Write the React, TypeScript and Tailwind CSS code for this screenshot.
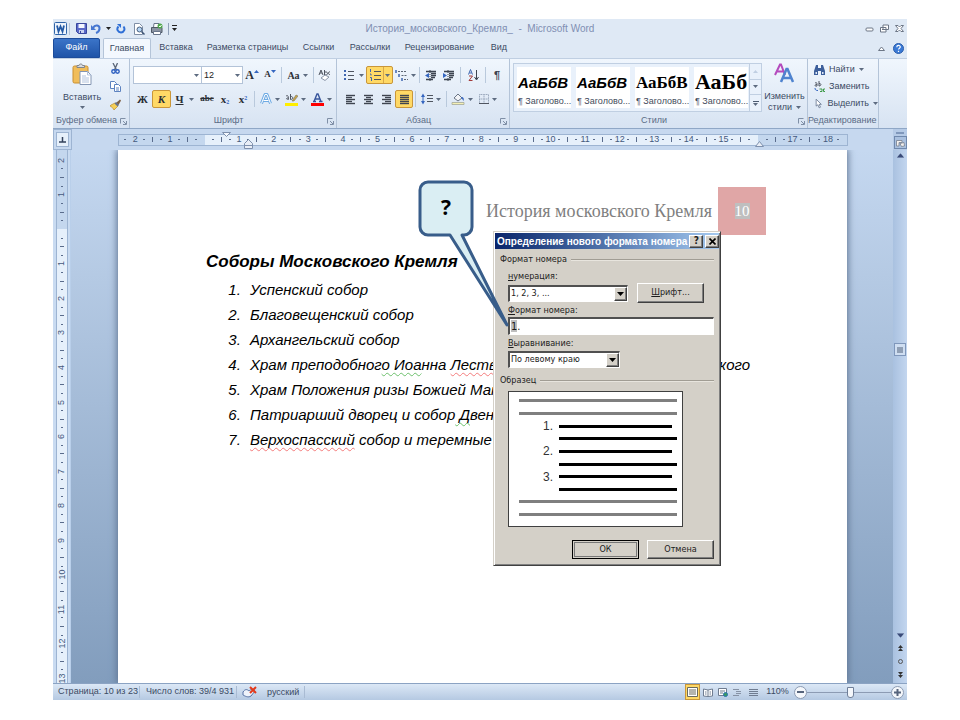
import type { ReactNode } from "react";

const TICK = "flex items-center justify-center";

function Caret({ className = "text-[#5d6b80]" }: { className?: string }) {
  return (
    <svg viewBox="0 0 5 3" className={`h-[3px] w-[5px] shrink-0 ${className}`} fill="currentColor">
      <path d="M0 0h5L2.500 3z" />
    </svg>
  );
}

function Separator() {
  return <span className="mx-[2px] h-4 w-px shrink-0 bg-[#b9c9dc]" />;
}

function ToolButton({
  label,
  width,
  active,
  caret,
  children,
}: {
  label: string;
  width: string;
  active?: boolean;
  caret?: boolean;
  children: ReactNode;
}) {
  return (
    <button
      type="button"
      aria-label={label}
      className={`flex h-[18px] shrink-0 items-center justify-center gap-[3px] rounded-[2px] ${width} ${
        active ? "border border-[#c9963a] bg-[#ffd966]" : ""
      }`}
    >
      {children}
      {caret && <Caret />}
    </button>
  );
}

function Launcher() {
  return (
    <svg viewBox="0 0 7 7" className="h-[7px] w-[7px] shrink-0" fill="none" stroke="#7f8fa6">
      <path d="M.5 5.500V.5h5M3 3l3 3M6.500 3v3.500H3" />
    </svg>
  );
}

function Group({
  title,
  width,
  launcher = true,
  children,
}: {
  title: string;
  width: string;
  launcher?: boolean;
  children: ReactNode;
}) {
  return (
    <section
      className={`flex shrink-0 flex-col border-r border-[#b4c4d8] ${width}`}
      aria-label={title}
    >
      <div className="min-h-0 flex-1">{children}</div>
      <div className="flex h-[14px] items-center pr-[2px] text-[#5b6c86]">
        <span className="flex-1 text-center whitespace-nowrap">{title}</span>
        {launcher && <Launcher />}
      </div>
    </section>
  );
}

function Lines({ rows }: { rows: [number, number][] }) {
  return (
    <svg viewBox="0 0 11 11" className="h-[11px] w-[11px]" stroke="#3f4550" strokeWidth="1.400">
      {rows.map(([x1, x2], i) => (
        <path key={i} d={`M${x1} ${i * 2 + 1.5}H${x2}`} />
      ))}
    </svg>
  );
}

function ListGlyph({ kind }: { kind: "bullets" | "numbers" | "levels" }) {
  return (
    <svg viewBox="0 0 13 12" className="h-[12px] w-[13px]" fill="none">
      {kind === "bullets" && (
        <>
          <path d="M1 2h2M1 6h2M1 10h2" stroke="#3f66b0" strokeWidth="2" />
          <path d="M5 2.500h6M5 6.500h6M5 10.500h6" stroke="#4f5560" />
        </>
      )}
      {kind === "numbers" && (
        <>
          <path d="M1.500 0v3M1 5h1v1.500M1 8.500h1.500V12" stroke="#3f66b0" />
          <path d="M5 2.500h7M5 6.500h7M5 10.500h7" stroke="#4f5560" />
        </>
      )}
      {kind === "levels" && (
        <>
          <path d="M1 1v3M4 5v3M7 9v3" stroke="#3f66b0" strokeWidth="1.500" />
          <path d="M3 2.500h8M6.500 6.500h5M9 10.500h4" stroke="#5c6674" strokeDasharray="2 1" />
        </>
      )}
    </svg>
  );
}

function IndentGlyph({ flip }: { flip?: boolean }) {
  return (
    <svg viewBox="0 0 12 11" className="h-[11px] w-[12px]" fill="none">
      <path d="M1 1.500h10M6 3.500h5M6 5.500h5M6 7.500h4M1 9.500h7" stroke="#3d4450" strokeWidth="1.300" />
      <path d={flip ? "M0 3v5l4-2.500z" : "M4 3v5L0 5.500z"} fill="#3566c0" />
      <path d="M5 0v11" stroke="#3d4450" strokeDasharray="1 1" />
    </svg>
  );
}

function QuickAccess() {
  return (
    <div className="flex items-center pl-[1px]">
      <svg viewBox="0 0 13 13" className="h-[13px] w-[13px]">
        <rect x=".5" y=".5" width="12" height="12" rx="1" fill="#eef4fc" stroke="#2f64a8" />
        <path d="M3 3.500 4.500 9.500 6.500 4.500 8.500 9.500 10 3.500" fill="none" stroke="#2359a5" strokeWidth="1.800" />
      </svg>
      <span className="mx-[2px] h-3 w-px bg-[#b4c4d8]" />
      <button type="button" aria-label="Сохранить" className="flex w-[18px] justify-center">
        <svg viewBox="0 0 11 11" className="h-[11px] w-[11px]">
          <path d="M.5.5h10v10h-8l-2-2z" fill="#5968c8" stroke="#38469d" />
          <path d="M2.500 1h6v4h-6z" fill="#f3f6ff" />
          <path d="M3 7h5v3H3z" fill="#c9d2f0" />
          <path d="M4 8h1v2H4z" fill="#38469d" />
        </svg>
      </button>
      <button type="button" aria-label="Отменить" className="flex w-[22px] items-center justify-center gap-[5px]">
        <svg viewBox="0 0 10 11" className="h-[11px] w-[10px]" fill="none" stroke="#4677d1" strokeWidth="2">
          <path d="M2 5c2-4 7-3 6.500 1C8 8.500 6.500 9.500 5 10" />
          <path d="M0 2v5h5z" fill="#4677d1" stroke="none" />
        </svg>
        <Caret className="text-[#222]" />
      </button>
      <button type="button" aria-label="Повторить" className="flex w-[18px] justify-center">
        <svg viewBox="0 0 10 11" className="h-[11px] w-[10px]" fill="none" stroke="#2f6fd6" strokeWidth="2">
          <path d="M2.500 3.500C0 6 2 9.500 5 9.500S9.500 6 7.500 3.500" />
          <path d="M1 1h4v4z" fill="#2f6fd6" stroke="none" />
        </svg>
      </button>
      <button type="button" aria-label="Просмотр" className="flex w-[18px] justify-center">
        <svg viewBox="0 0 12 12" className="h-[12px] w-[12px]" fill="none">
          <path d="M1.500.5h5l3 3v8h-8z" fill="#fff" stroke="#7f8ea5" />
          <circle cx="6.500" cy="6.500" r="2.500" fill="#b5d5f5" stroke="#4b617f" />
          <path d="m8.500 8.500 3 3" stroke="#3e5474" strokeWidth="1.500" />
        </svg>
      </button>
      <button type="button" aria-label="Печать" className="flex w-[18px] justify-center">
        <svg viewBox="0 0 12 12" className="h-[12px] w-[12px]">
          <path d="M3 .5h5l1 4H2.500z" fill="#fff" stroke="#69758a" />
          <path d="M.5 4.500h10.500v5H.5z" fill="#8b94a3" stroke="#4e5866" />
          <path d="M2.500 8.500h7v3h-7z" fill="#fff" stroke="#69758a" />
          <circle cx="9" cy="3" r="2.500" fill="#4ea64a" />
          <path d="m8 3 1 1 1.500-2" fill="none" stroke="#fff" />
        </svg>
      </button>
      <span className="mx-[2px] h-3 w-px bg-[#8fa0b8]" />
      <svg viewBox="0 0 7 7" className="h-[7px] w-[7px]" fill="#222">
        <path d="M1 0h5v1H1zM1 3h5L3.500 6z" />
      </svg>
    </div>
  );
}

function TitleBar() {
  return (
    <header className="flex h-[19px] items-center justify-between text-[#7f8fb3]">
      <div className="w-[140px]">
        <QuickAccess />
      </div>
      <h1 className="text-[10px] whitespace-pre">История_московского_Кремля_  -  Microsoft Word</h1>
      <div className="flex w-[140px] items-center justify-end gap-[6px] pr-[3px]">
        <button type="button" aria-label="Свернуть">
          <svg viewBox="0 0 9 9" className="h-[9px] w-[9px]" fill="#fff" stroke="#6c7686">
            <rect x="1" y="4" width="7" height="3" rx="1" />
          </svg>
        </button>
        <button type="button" aria-label="Восстановить">
          <svg viewBox="0 0 9 9" className="h-[9px] w-[9px]" fill="#fff" stroke="#6c7686">
            <path d="M3 1h5.500v4.500H3zM.5 3.500h5.500V8H.5zM2 5.500h2.500" />
          </svg>
        </button>
        <button type="button" aria-label="Закрыть">
          <svg viewBox="0 0 9 9" className="h-[9px] w-[9px]" fill="#fff" stroke="#6c7686">
            <path d="M.5 1.500h2.500l1.500 1.500 1.500-1.500h2.500L6 4.500l2.500 3H6L4.500 6 3 7.500H.5l2.500-3z" />
          </svg>
        </button>
      </div>
    </header>
  );
}

function TabBar() {
  const tabs = [
    { name: "Вставка", width: "w-[50px]" },
    { name: "Разметка страницы", width: "w-[93px]" },
    { name: "Ссылки", width: "w-[49px]" },
    { name: "Рассылки", width: "w-[54px]" },
    { name: "Рецензирование", width: "w-[85px]" },
    { name: "Вид", width: "w-[34px]" },
  ];
  return (
    <nav className="flex h-5 text-[#3b4a63]">
      <button type="button" className="w-[47px] rounded-t-[2px] border border-[#1d4c9b] bg-linear-to-b from-[#3b74c8] to-[#1f54a8] text-white">
        Файл
      </button>
      <button type="button" className="ml-[3px] w-[48px] rounded-t-[2px] border border-b-0 border-[#b4c4d8] bg-[#f3f8fe]">
        Главная
      </button>
      {tabs.map((tab) => (
        <button type="button" key={tab.name} className={`whitespace-nowrap ${tab.width}`}>
          {tab.name}
        </button>
      ))}
      <div className="ml-auto flex items-center gap-2 pr-[3px]">
        <svg viewBox="0 0 7 5" className="h-[5px] w-[7px]" fill="#fff" stroke="#6c7686">
          <path d="M.5 4.500 3.500 1l3 3.500z" />
        </svg>
        <button type="button" aria-label="Справка">
          <svg viewBox="0 0 11 11" className="h-[11px] w-[11px]">
            <circle cx="5.500" cy="5.500" r="5" fill="#3b7ad6" stroke="#2a5caa" />
            <path d="M3.800 4.200c0-2.400 3.500-2.200 3.500-.2 0 1.200-1.800 1.200-1.800 2.600M5.500 7.800v1.200" fill="none" stroke="#fff" strokeWidth="1.200" />
          </svg>
        </button>
      </div>
    </nav>
  );
}

function Clipboard() {
  return (
    <Group title="Буфер обмена" width="w-[77px]">
      <div className="flex pt-[4px]">
        <button type="button" className="flex w-[58px] flex-col items-center text-[#3b4a63]">
          <svg viewBox="0 0 20 22" className="h-[22px] w-5">
            <rect x="1" y="3" width="15" height="17" rx="1.500" fill="#f0bd5b" stroke="#c98f31" />
            <path d="M5 4.500V2.500h2c0-2 3.500-2 3.500 0h2v2z" fill="#d8dbe0" stroke="#80858d" />
            <path d="M8 8.500h7.500l3.500 3.500v9.500H8z" fill="#fff" stroke="#8496b3" />
            <path d="M15.500 8.500V12H19M10 13h4M10 15h7M10 17h7M10 19h7" fill="none" stroke="#b3c4dd" />
          </svg>
          <span className="mt-[6px] leading-[12px]">Вставить</span>
          <span className="pt-[3px]">
            <Caret />
          </span>
        </button>
        <div className="flex flex-col gap-[7px]">
          <button type="button" aria-label="Вырезать" className="-ml-px">
            <svg viewBox="0 0 11 11" className="h-[11px] w-[11px]" fill="none">
              <path d="M3 0 6.500 7M7.500 0 4.500 7" stroke="#5b6678" strokeWidth="1.300" />
              <circle cx="3.500" cy="8.500" r="1.700" stroke="#2d5fc0" strokeWidth="1.400" />
              <circle cx="7.500" cy="8.500" r="1.700" stroke="#2d5fc0" strokeWidth="1.400" />
            </svg>
          </button>
          <button type="button" aria-label="Копировать" className="-ml-px">
            <svg viewBox="0 0 11 11" className="h-[11px] w-[11px]" fill="#fff" stroke="#5d83c0">
              <path d="M.5.5h4l2 2v5h-6z" />
              <path d="M4.500 3.500h4l2 2v5h-6zM6 7h3M6 9h3" />
            </svg>
          </button>
          <button type="button" aria-label="Формат по образцу" className="-ml-px">
            <svg viewBox="0 0 11 11" className="h-[11px] w-[11px]">
              <path d="m1 6 4-2 3 3-4 4C3 9 2 8 0 7z" fill="#f5cf57" stroke="#b98b2d" strokeWidth=".7" />
              <path d="m6 4 4-3.500 1 1L8.500 6z" fill="#7d6045" />
              <path d="m4.500 4.500 1.500-1.500 3 3L7.500 7.500z" fill="#66728c" />
            </svg>
          </button>
        </div>
      </div>
    </Group>
  );
}

function FontGroup() {
  const glyph = "font-['Liberation_Serif',serif] font-bold text-[#2b2f36]";
  return (
    <Group title="Шрифт" width="w-[207px]">
      <div className="flex flex-col gap-[6px] pt-[7px] pl-[3px]">
        <div className="flex items-center">
          <div className="relative h-[18px] w-[69px] shrink-0 border border-[#b3c3d8] bg-white">
            <input aria-label="Шрифт" className="w-full outline-none" />
            <span className="absolute top-[7px] right-[2px]"><Caret /></span>
          </div>
          <div className="relative h-[18px] w-[41px] shrink-0 border border-l-0 border-[#b3c3d8] bg-white">
            <input aria-label="Размер шрифта" defaultValue="12" className="w-full pl-[2px] leading-[16px] text-[#222] outline-none" />
            <span className="absolute top-[7px] right-[2px]"><Caret /></span>
          </div>
          <ToolButton label="Увеличить размер" width="w-[18px]">
            <span className={`text-[12px] ${glyph}`}>A</span>
            <Caret className="-ml-[3px] mb-2 rotate-180 text-[#3566c0]" />
          </ToolButton>
          <ToolButton label="Уменьшить размер" width="w-[18px]">
            <span className={`text-[9px] ${glyph}`}>A</span>
            <Caret className="-ml-[3px] mb-2 text-[#3566c0]" />
          </ToolButton>
          <Separator />
          <ToolButton label="Регистр" width="w-[27px]" caret>
            <span className={`text-[10px] ${glyph}`}>Aa</span>
          </ToolButton>
          <Separator />
          <ToolButton label="Очистить формат" width="w-[16px]">
            <svg viewBox="0 0 13 12" className="h-[12px] w-[13px]" fill="none">
              <path d="M1 6 3 1l2 5M2 4h2M6.500 1v5h1.500c2 0 2-3 0-3H6.500M12 3c-2-1-2 3 0 2.500" stroke="#4f5560" />
              <path d="m3 9 4-3 4 2-4 3.500z" fill="#fff" stroke="#8a96a8" />
            </svg>
          </ToolButton>
        </div>
        <div className="flex items-center">
          <ToolButton label="Полужирный" width="w-[19px]">
            <span className={`text-[11px] ${glyph}`}>Ж</span>
          </ToolButton>
          <ToolButton label="Курсив" width="w-[19px]" active>
            <span className={`text-[11px] italic ${glyph}`}>К</span>
          </ToolButton>
          <ToolButton label="Подчеркнутый" width="w-[27px]" caret>
            <span className={`pr-[2px] text-[11px] underline ${glyph}`}>Ч</span>
          </ToolButton>
          <ToolButton label="Зачеркнутый" width="w-[18px]">
            <span className={`text-[9px] line-through ${glyph}`}>abc</span>
          </ToolButton>
          <ToolButton label="Подстрочный" width="w-[18px]">
            <span className={`text-[11px] leading-none ${glyph}`}>x<sub className="text-[6px] text-[#3566c0]">2</sub></span>
          </ToolButton>
          <ToolButton label="Надстрочный" width="w-[18px]">
            <span className={`text-[11px] leading-none ${glyph}`}>x<sup className="text-[6px] text-[#3566c0]">2</sup></span>
          </ToolButton>
          <Separator />
          <ToolButton label="Эффекты текста" width="w-[25px]" caret>
            <svg viewBox="0 0 12 12" className="h-[12px] w-[12px]" fill="none" strokeLinejoin="round">
              <path d="M1.500 10.500 5 1.500h2l3.500 9M3.500 7.500h5" stroke="#6fabe4" strokeWidth="3" />
              <path d="M1.500 10.500 5 1.500h2l3.500 9M3.500 7.500h5" stroke="#fff" />
            </svg>
          </ToolButton>
          <ToolButton label="Цвет выделения" width="w-[26px]" caret>
            <svg viewBox="0 0 13 13" className="h-[13px] w-[13px]" fill="none">
              <path d="M0 10h13v3H0z" fill="#ffee00" />
              <path d="M1 3c2-1 2.500 0 2.500 3.500M3.500 5C1 4.500 1 7 3.500 6M5.500 1v5.500c3 0 3-3.500 0-3" stroke="#4f5560" />
              <path d="m7 8 4-6 2 1-4 5z" fill="#c9a64a" stroke="#7b7460" strokeWidth=".6" />
            </svg>
          </ToolButton>
          <ToolButton label="Цвет текста" width="w-[26px]" caret>
            <svg viewBox="0 0 13 13" className="h-[13px] w-[13px]" fill="none">
              <path d="M0 10h13v3H0z" fill="#f00" />
              <path d="M3 8.500 6 1h1l3 7.500M4 6h5M2 8.500h3M8 8.500h3.500" stroke="#37559c" strokeWidth="1.400" />
            </svg>
          </ToolButton>
        </div>
      </div>
    </Group>
  );
}

function ParagraphGroup() {
  return (
    <Group title="Абзац" width="w-[173px]">
      <div className="flex flex-col gap-[6px] pt-[7px] pl-[4px]">
        <div className="flex items-center">
          <ToolButton label="Маркеры" width="w-[25px]" caret><ListGlyph kind="bullets" /></ToolButton>
          <ToolButton label="Нумерация" width="w-[27px]" active caret>
            <ListGlyph kind="numbers" />
            <span className="-mx-[2px] h-4 w-px bg-[#d9a84a]" />
          </ToolButton>
          <ToolButton label="Многоуровневый список" width="w-[24px]" caret><ListGlyph kind="levels" /></ToolButton>
          <Separator />
          <ToolButton label="Уменьшить отступ" width="w-[18px]"><IndentGlyph /></ToolButton>
          <ToolButton label="Увеличить отступ" width="w-[18px]"><IndentGlyph flip /></ToolButton>
          <Separator />
          <ToolButton label="Сортировка" width="w-[20px]">
            <svg viewBox="0 0 11 12" className="h-[12px] w-[11px]" fill="none">
              <path d="M.5 5.500 2.500.5l2 5M1.500 4h2" stroke="#3f66b0" />
              <path d="M1 7h3.500L1 11.500h3.500" stroke="#a23b3b" />
              <path d="M8.500 1v9M6.500 8l2 3 2-3" stroke="#3d4450" />
            </svg>
          </ToolButton>
          <Separator />
          <ToolButton label="Знаки абзаца" width="w-[18px]">
            <span className="text-[11px] font-bold text-[#3d4450]">¶</span>
          </ToolButton>
        </div>
        <div className="flex items-center">
          <ToolButton label="По левому краю" width="w-[18px]"><Lines rows={[[1, 10], [1, 7], [1, 10], [1, 7], [1, 10]]} /></ToolButton>
          <ToolButton label="По центру" width="w-[18px]"><Lines rows={[[1, 10], [3, 8], [1, 10], [3, 8], [1, 10]]} /></ToolButton>
          <ToolButton label="По правому краю" width="w-[18px]"><Lines rows={[[1, 10], [4, 10], [1, 10], [4, 10], [1, 10]]} /></ToolButton>
          <ToolButton label="По ширине" width="w-[18px]" active><Lines rows={[[1, 10], [1, 10], [1, 10], [1, 10], [1, 10]]} /></ToolButton>
          <Separator />
          <ToolButton label="Интервал" width="w-[26px]" caret>
            <svg viewBox="0 0 12 12" className="h-[12px] w-[12px]" fill="none">
              <path d="M2 2v8" stroke="#3566c0" />
              <path d="M0 4 2 .5 4 4zM0 8l2 3.500L4 8z" fill="#3566c0" />
              <path d="M6 2.500h6M6 5.500h6M6 8.500h6" stroke="#4f5560" />
            </svg>
          </ToolButton>
          <Separator />
          <ToolButton label="Заливка" width="w-[26px]" caret>
            <svg viewBox="0 0 14 12" className="h-[12px] w-[14px]">
              <path d="m3 5 4-4 4 4-4 3z" fill="#f2f4f8" stroke="#6c7686" />
              <path d="M10 4c3 0 3 2 2.500 4L10.500 5z" fill="#3566c0" />
              <path d="M1 9.500h12v2H1z" fill="#f5f0b5" stroke="#a5a898" strokeWidth=".8" />
            </svg>
          </ToolButton>
          <ToolButton label="Границы" width="w-[25px]" caret>
            <svg viewBox="0 0 10 10" className="h-[10px] w-[10px]" fill="none">
              <path d="M.5.5h9v9h-9zM5 .5v9M.5 5h9" stroke="#95a3b8" strokeDasharray="1 .6" />
              <path d="M0 9.500h10" stroke="#4f5560" />
            </svg>
          </ToolButton>
        </div>
      </div>
    </Group>
  );
}

function StylesGroup() {
  const samples = [
    { text: "АаБбВ", font: "font-['Liberation_Sans',sans-serif] text-[15px] italic" },
    { text: "АаБбВ", font: "font-['Liberation_Sans',sans-serif] text-[15px] italic" },
    { text: "АаБбВ", font: "font-['Liberation_Serif',serif] text-[17px]" },
    { text: "АаБб", font: "font-['Liberation_Serif',serif] text-[22px]" },
  ];
  return (
    <Group title="Стили" width="w-[298px]">
      <div className="flex pt-[4px] pl-[3px]">
        <div className="flex h-[49px] w-[249px] shrink-0 border border-[#c0cfe2] bg-[#e9f1fb]">
          <div className="flex flex-1 items-center gap-[5px] pl-[3px]">
            {samples.map((sample, i) => (
              <button type="button" key={i} className="flex h-[41px] w-[54px] shrink-0 flex-col justify-end overflow-hidden bg-white">
                <span className={`flex h-[26px] w-full items-center pl-px leading-none font-bold text-black ${sample.font}`}>
                  {sample.text}
                </span>
                <span className="flex h-[13px] w-full items-center pl-px whitespace-nowrap text-[#444c5c]">¶ Заголово...</span>
              </button>
            ))}
          </div>
          <div className="grid w-[12px] grid-rows-3 divide-y divide-[#c0cfe2] border-l border-[#c0cfe2]">
            <button type="button" aria-label="Вверх" className={TICK}><Caret className="rotate-180 text-[#c0cfe2]" /></button>
            <button type="button" aria-label="Вниз" className={TICK}><Caret /></button>
            <button type="button" aria-label="Все стили" className={`flex-col gap-px ${TICK}`}>
              <span className="h-px w-[6px] bg-[#4b5a70]" />
              <Caret />
            </button>
          </div>
        </div>
        <button type="button" className="flex flex-1 flex-col items-center leading-[11px] whitespace-nowrap text-[#3b4a63]">
          <svg viewBox="0 0 21 21" className="h-[21px] w-[21px]" fill="none">
            <path d="M1 12 6 1.500h1L11 12M3 8.500h6" stroke="#b44bbd" strokeWidth="2" />
            <path d="m7 19 5.500-13h1L19 19M9 15h8" stroke="#4f83cf" strokeWidth="2.500" />
          </svg>
          <span className="mt-[7px]">Изменить</span>
          <span className="flex items-center gap-1">стили <Caret /></span>
        </button>
      </div>
    </Group>
  );
}

function EditingGroup() {
  return (
    <Group title="Редактирование" width="w-[71px]" launcher={false}>
      <div className="flex flex-col gap-[4px] pt-[4px] pl-[6px] text-[#3b4a63]">
        <button type="button" className="flex h-[13px] items-center gap-[4px]">
          <svg viewBox="0 0 11 10" className="h-[10px] w-[11px]" fill="#3d5f9b">
            <path d="M2 0h2v3h3V0h2l2 6v4H7V6H4v4H0V6z" />
            <path d="M1.500 7h1.500v2H1.500zM8 7h1.500v2H8z" fill="#dfe9f7" />
          </svg>
          Найти <Caret />
        </button>
        <button type="button" className="flex h-[13px] items-center gap-[4px]">
          <svg viewBox="0 0 11 11" className="h-[11px] w-[11px]" fill="none">
            <path d="M1 2c2-1 2 0 2 3M3 3.500C.5 3 .5 6 3 5M5 0v5c2.500 0 2.500-3 0-2.500" stroke="#4f5560" />
            <path d="M1 7c0 2 1 2.500 3 2.500" stroke="#3566c0" />
            <path d="M5.500 8h2.500v2.500H6M11 8H9.500v2.500H11" stroke="#3c9a48" />
          </svg>
          Заменить
        </button>
        <button type="button" className="flex h-[13px] items-center gap-[4px]">
          <svg viewBox="0 0 11 11" className="h-[11px] w-[11px]">
            <path d="M2.500.5v8l2-1.500L6 10.500l1.500-.7L6 6.500h2.500z" fill="#fff" stroke="#5f6f8a" strokeWidth=".9" />
          </svg>
          Выделить <Caret />
        </button>
      </div>
    </Group>
  );
}

const DARK = "bg-[#c4d7ee]";
const LIGHT = "bg-[#e6f0fb]";

function Mark({ value, vertical, fill, slotFill = "" }: { value: string; vertical?: boolean; fill: string; slotFill?: string }) {
  const cell = vertical ? "grid-rows-4" : "grid-cols-4";
  const dot = "h-px w-[2px] bg-[#5a6c8c]";
  return (
    <span className={`grid min-h-0 min-w-0 flex-1 ${cell} ${fill}`}>
      <span className={`min-h-0 min-w-0 ${TICK} ${slotFill}`}>
        <span className={vertical ? "-rotate-90" : ""}>{value}</span>
      </span>
      <span className={TICK}><span className={dot} /></span>
      <span className={TICK}><span className={vertical ? "h-px w-1 bg-[#5a6c8c]" : "h-[5px] w-px bg-[#5a6c8c]"} /></span>
      <span className={TICK}><span className={dot} /></span>
    </span>
  );
}

function HorizontalRuler() {
  const numbers = ["2", "1", "", "1", "2", "3", "4", "5", "6", "7", "8", "9", "10", "11", "12", "13", "14", "15", "", "17"];
  const slots: Record<number, string> = {
    2: "bg-linear-to-r from-[#c4d7ee] from-50% to-[#e6f0fb] to-50%",
    18: "bg-linear-to-r from-[#e6f0fb] from-50% to-[#c4d7ee] to-50%",
  };
  return (
    <div className="relative mr-[45px] ml-[46px] flex h-[12px] flex-1 border border-[#9db4d2] text-[9px] leading-none text-[#44597d]">
      <span className={`w-[12px] ${DARK} ${TICK}`}><span className="h-px w-[2px] bg-[#5a6c8c]" /></span>
      {numbers.map((value, i) => (
        <Mark key={i} value={value} fill={i < 2 || i > 17 ? DARK : LIGHT} slotFill={slots[i]} />
      ))}
      <span className={`flex w-[24px] items-center gap-[4px] ${DARK}`}>18<span className="h-px w-[2px] bg-[#5a6c8c]" /></span>
      <svg viewBox="0 0 9 5" className="absolute -top-[3px] left-[103px] h-[5px] w-[9px]" fill="#f4f8fd" stroke="#7e90ad">
        <path d="M.5.5h8l-4 4z" />
      </svg>
      <svg viewBox="0 0 9 10" className="absolute top-[4px] left-[125px] h-[10px] w-[9px]" fill="#e8eef7" stroke="#7e90ad">
        <path d="M.5 4.500 4.500.5l4 4v5h-8zM.5 6.500h8" />
      </svg>
      <svg viewBox="0 0 9 6" className="absolute right-[83px] bottom-[-2px] h-[6px] w-[9px]" fill="#e8eef7" stroke="#7e90ad">
        <path d="M.5 5.500 4.500.5l4 5z" />
      </svg>
    </div>
  );
}

function VerticalRuler() {
  const numbers = ["2", "1", "", "1", "2", "3", "4", "5", "6", "7", "8", "9", "10", "11", "12"];
  const slots: Record<number, string> = {
    2: "bg-linear-to-b from-[#c4d7ee] from-50% to-[#e6f0fb] to-50%",
  };
  return (
    <div className="flex w-[18px] shrink-0 flex-col border-r border-[#b9cfea] bg-[#c9dbf1] pl-[3px]">
      <div className="flex min-h-0 w-[12px] flex-1 flex-col border-x border-[#9db4d2] text-[9px] leading-none text-[#44597d]">
        <span className={`h-[6px] ${DARK}`} />
        {numbers.map((value, i) => (
          <Mark key={i} value={value} vertical fill={i < 2 ? DARK : LIGHT} slotFill={slots[i]} />
        ))}
        <span className={`h-[9px] ${LIGHT} ${TICK}`}><span className="-rotate-90">13</span></span>
      </div>
    </div>
  );
}

function Wavy({ children, green }: { children: ReactNode; green?: boolean }) {
  return (
    <span
      className={`underline decoration-wavy decoration-1 underline-offset-2 [text-decoration-skip-ink:none] ${
        green ? "decoration-[#6cc06c]" : "decoration-[#f47c7c]"
      }`}
    >
      {children}
    </span>
  );
}

function Document() {
  return (
    <article className="px-[88px] pt-[101px] font-['Liberation_Sans',sans-serif] text-black italic">
      <h2 className="text-[17px] leading-[22px] font-bold whitespace-nowrap">Соборы Московского Кремля</h2>
      <ol className="mt-[4px] list-decimal pl-[39px] text-[15px] leading-[25px] whitespace-nowrap marker:text-black">
        <li className="pl-[5px]">Успенский собор</li>
        <li className="pl-[5px]">Благовещенский собор</li>
        <li className="pl-[5px]">Архангельский собор</li>
        <li className="pl-[5px]">
          Храм преподобног<Wavy green>о Иоа</Wavy>нна <Wavy>Лествичника</Wavy>, колокольня Ивана Великого
        </li>
        <li className="pl-[5px]">Храм Положения ризы Божией Матери</li>
        <li className="pl-[5px]">Патриарший дворец и собор<Wavy green> Д</Wavy>венадцати апостолов</li>
        <li className="pl-[5px]"><Wavy>Верхоспасский</Wavy> собор и теремные церкви</li>
      </ol>
    </article>
  );
}

const RAISED = "border border-t-white border-r-[#404040] border-b-[#404040] border-l-white shadow-[inset_-1px_-1px_0_#808080] bg-[#d4d0c8]";
const SUNKEN = "border-t-2 border-l-2 border-r border-b border-t-[#505050] border-l-[#505050] border-r-white border-b-white bg-white";

function Legend({ children }: { children: ReactNode }) {
  return (
    <legend className="flex h-[12px] w-full items-center gap-[4px] whitespace-nowrap">
      {children}
      <span className="h-[2px] flex-1 border-t border-[#a19d94] bg-[#e8e5de]" />
    </legend>
  );
}

function Dropdown({ id, value, width }: { id: string; value: string; width: string }) {
  return (
    <div className={`relative h-[17px] ${width} ${SUNKEN}`}>
      <select id={id} defaultValue={value} className="h-full w-full appearance-none pl-px outline-none">
        <option>{value}</option>
      </select>
      <span className={`pointer-events-none absolute top-0 right-0 h-[14px] w-[13px] ${TICK} ${RAISED}`}>
        <svg viewBox="0 0 7 4" className="h-[4px] w-[7px]"><path d="M0 0h7L3.500 4z" /></svg>
      </span>
    </div>
  );
}

function Preview() {
  return (
    <svg viewBox="0 0 173 134" className="h-[134px] w-[173px]" aria-label="Образец списка">
      <path d="M10 8.500h158M10 21.500h158M10 109.500h158M10 122.500h158" stroke="#7f7f7f" strokeWidth="3" />
      <path d="M50 34.500h113M50 46.500h118M50 59.500h113M50 72.500h118M50 84.500h113M50 97.500h118" stroke="#000" strokeWidth="3" />
      <g fontFamily="Liberation Sans, sans-serif" fontSize="12" fill="#333">
        <text x="34" y="38">1.</text>
        <text x="34" y="63">2.</text>
        <text x="34" y="89">3.</text>
      </g>
    </svg>
  );
}

function NumberFormatDialog() {
  return (
    <div
      role="dialog"
      aria-label="Определение нового формата номера"
      className="absolute top-[81px] left-[375px] w-[228px] border border-[#d4d0c8] border-r-[#404040] border-b-[#404040] bg-[#d4d0c8] p-px pb-[6px] font-['DejaVu_Sans_Condensed','DejaVu_Sans',sans-serif] text-[9px] text-[#1c1c1c] shadow-[inset_1px_1px_0_#fff,inset_-1px_-1px_0_#808080]"
    >
      <div className="flex h-[16px] items-center gap-[2px] bg-linear-to-r from-[#0a246a] to-[#a6caf0] px-[2px]">
        <h2 className="flex-1 font-['Liberation_Sans',sans-serif] text-[10px] font-bold whitespace-nowrap text-white">Определение нового формата номера</h2>
        <button type="button" aria-label="Справка" className={`h-[13px] w-[14px] shrink-0 ${TICK} ${RAISED}`}>
          <span className="text-[10px] leading-none font-bold">?</span>
        </button>
        <button type="button" aria-label="Закрыть" className={`h-[13px] w-[14px] shrink-0 ${TICK} ${RAISED}`}>
          <svg viewBox="0 0 7 7" className="h-[7px] w-[7px]" stroke="#000" strokeWidth="1.600"><path d="m.5.5 6 6M6.500.5l-6 6" /></svg>
        </button>
      </div>

      <fieldset className="mt-[5px] px-[5px]">
        <Legend>Формат номера</Legend>
        <div className="pl-[8px]">
          <label htmlFor="numbering" className="mt-[4px] block leading-[12px]"><u>н</u>умерация:</label>
          <div className="mt-[1px] flex items-center gap-[9px]">
            <Dropdown id="numbering" value="1, 2, 3, ..." width="w-[120px]" />
            <button type="button" className={`h-[20px] w-[67px] ${RAISED}`}><u>Ш</u>рифт...</button>
          </div>
          <label htmlFor="format" className="mt-[1px] block leading-[12px]"><u>Ф</u>ормат номера:</label>
          <input
            id="format"
            defaultValue="1."
            className={`mt-[1px] block h-[18px] w-full bg-[linear-gradient(#bfbfbf,#bfbfbf)] bg-[length:6px_12px] bg-[position:1px_1px] bg-no-repeat pl-[1px] text-[11px] outline-none ${SUNKEN}`}
          />
          <label htmlFor="align" className="mt-[2px] block leading-[12px]"><u>В</u>ыравнивание:</label>
          <div className="mt-[2px]">
            <Dropdown id="align" value="По левому краю" width="w-[112px]" />
          </div>
        </div>
      </fieldset>

      <fieldset className="mt-[7px] px-[5px]">
        <Legend>Образец</Legend>
        <div className="mt-[4px] ml-[8px] w-[175px] border border-[#404040] bg-white"><Preview /></div>
      </fieldset>

      <div className="mt-[13px] flex justify-end gap-[8px] pr-[5px]">
        <button type="button" className="h-[19px] w-[67px] border border-black bg-[#d4d0c8] p-px">
          <span className="flex h-full items-center justify-center border border-[#777]">ОК</span>
        </button>
        <button type="button" className={`h-[19px] w-[67px] ${RAISED}`}>Отмена</button>
      </div>
    </div>
  );
}

function Callout() {
  return (
    <div className="absolute top-[30px] left-[300px] h-[150px] w-[92px]">
      <svg viewBox="0 0 92 150" className="absolute inset-0 h-full w-full" fill="#daeef3" stroke="#385d8a" strokeWidth="3" strokeLinejoin="round">
        <path d="M10 2h36a8 8 0 0 1 8 8v37a8 8 0 0 1-8 8h-2L89 145 32 55H10a8 8 0 0 1-8-8V10a8 8 0 0 1 8-8z" />
      </svg>
      <span className="relative flex h-[56px] w-[56px] items-center justify-center font-['Open_Sans',sans-serif] text-[21px] font-bold text-black">?</span>
    </div>
  );
}

function Scrollbar() {
  return (
    <div className="flex w-[14px] shrink-0 flex-col items-center bg-linear-to-r from-[#a9c1e0] to-[#c3d6ef]">
      <span className="flex h-[11px] items-center"><Caret className="scale-150 rotate-180 text-[#3a4b78]" /></span>
      <div className="flex flex-1 flex-col pt-[182px]">
        <span className={`h-[13px] w-[12px] border border-[#7f97bb] bg-[#cfdef1] ${TICK}`}><span className="h-[6px] w-[6px] bg-[#8f9fb5]" /></span>
      </div>
      <div className="flex flex-col items-center gap-[8px] pb-[5px]">
        <Caret className="scale-150 text-[#3a4b78]" />
        <svg viewBox="0 0 5 6" className="h-[6px] w-[5px]" fill="#333"><path d="M0 3 2.500 0 5 3zM0 6l2.500-3L5 6z" /></svg>
        <span className="h-[5px] w-[5px] rounded-full border border-[#555]" />
        <svg viewBox="0 0 5 6" className="h-[6px] w-[5px]" fill="#333"><path d="M0 0h5L2.500 3zM0 3h5L2.500 6z" /></svg>
      </div>
    </div>
  );
}

function StatusBar() {
  return (
    <footer className="flex h-[17px] shrink-0 items-center border-t border-[#8ba3c3] bg-linear-to-b from-[#dce8f6] to-[#b5c9e2] text-[#3b4a63]">
      <span className="w-[86px] pl-[5px] whitespace-nowrap">Страница: 10 из 23</span>
      <span className="flex h-3 w-[98px] items-center border-x border-[#a9bbd3] pl-[6px] whitespace-nowrap">Число слов: 39/4 931</span>
      <svg viewBox="0 0 15 12" className="ml-[5px] h-[12px] w-[15px]">
        <path d="M1 6c2-3 4-3 6-1 2-2 4-2 6 0L9 10c-3 2-6 0-8-1z" fill="#eef3fb" stroke="#5571a5" />
        <path d="m8 1 6 6M14 1 8 7" stroke="#e23a1c" strokeWidth="2" />
      </svg>
      <span className="ml-[10px] h-3 w-[38px] border-r border-[#a9bbd3] leading-[12px]">русский</span>
      <div className="ml-auto flex items-center">
        <button type="button" aria-label="Разметка страницы" className="flex h-[16px] w-[15px] items-center justify-center border border-[#c9963a] bg-[#ffd966]">
          <svg viewBox="0 0 11 10" className="h-[10px] w-[11px]" fill="#fff" stroke="#6b6a5c"><path d="M.5.500h10v9H.5zM2 3h7M2 5h7M2 7h7" /></svg>
        </button>
        <button type="button" aria-label="Режим чтения" className="flex w-[16px] justify-center">
          <svg viewBox="0 0 10 9" className="h-[9px] w-[10px]" fill="#fff" stroke="#6f7c90"><path d="M.5 1 5 2 9.500 1v7L5 8.500.5 8zM5 2v6M2 4h1.500M6.500 4H8M2 6h1.500M6.500 6H8" /></svg>
        </button>
        <button type="button" aria-label="Веб-документ" className="flex w-[13px] justify-center">
          <svg viewBox="0 0 10 9" className="h-[9px] w-[10px]" fill="#fff" stroke="#6f7c90"><path d="M.5.500h8v7h-8zM2 3h5M2 5h3" /><circle cx="7.500" cy="6.500" r="2" fill="#3a9a62" stroke="#2870b0" /></svg>
        </button>
        <button type="button" aria-label="Структура" className="flex w-[16px] justify-center">
          <svg viewBox="0 0 8 9" className="h-[9px] w-[8px]" stroke="#8692a5"><path d="M0 1.500h6M3 3.500h5M3 5.500h5M0 7.500h6" /></svg>
        </button>
        <button type="button" aria-label="Черновик" className="flex w-[16px] justify-center">
          <svg viewBox="0 0 9 9" className="h-[9px] w-[9px]" stroke="#6f7c90"><path d="M0 1.500h9M0 3.500h9M0 5.500h9M0 7.500h9" /></svg>
        </button>
        <span className="w-[33px] text-center">110%</span>
        <button type="button" aria-label="Уменьшить" className={`h-[13px] w-[13px] rounded-full border border-[#8c9bb3] bg-[#f4f7fb] ${TICK}`}>
          <span className="h-[2px] w-[7px] bg-[#56647c]" />
        </button>
        <input
          type="range"
          aria-label="Масштаб"
          defaultValue="52"
          className="h-[13px] w-[84px] appearance-none bg-[linear-gradient(#8c9bb3,#8c9bb3)] bg-[length:100%_1px] bg-center bg-no-repeat [&::-webkit-slider-thumb]:h-[11px] [&::-webkit-slider-thumb]:w-[7px] [&::-webkit-slider-thumb]:appearance-none [&::-webkit-slider-thumb]:rounded-b-[3px] [&::-webkit-slider-thumb]:border [&::-webkit-slider-thumb]:border-[#6f7f99] [&::-webkit-slider-thumb]:bg-[#f4f7fb]"
        />
        <button type="button" aria-label="Увеличить" className={`mr-[3px] h-[13px] w-[13px] rounded-full border border-[#8c9bb3] bg-[#f4f7fb] ${TICK}`}>
          <svg viewBox="0 0 7 7" className="h-[7px] w-[7px]" stroke="#56647c" strokeWidth="2"><path d="M3.500 0v7M0 3.500h7" /></svg>
        </button>
      </div>
    </footer>
  );
}

export default function App() {
  return (
    <div className="flex h-screen flex-col bg-white px-[53px] pt-[19px] pb-5 font-['Liberation_Sans','Open_Sans',sans-serif] text-[9px]">
      <div className="flex min-h-0 flex-1 flex-col bg-[#dfe9f5]">
        <TitleBar />
        <TabBar />
        <div className="flex h-[71px] shrink-0 border-y border-t-[#c0cfe2] border-b-[#8fa7c6] bg-linear-to-b from-[#f0f6fd] to-[#d7e3f2]">
          <Clipboard />
          <FontGroup />
          <ParagraphGroup />
          <StylesGroup />
          <EditingGroup />
        </div>

        <div className="flex h-[21px] shrink-0 items-center bg-[#c6d8ef]">
          <div className="h-full w-[19px] border border-[#9db4d2] p-[2px]">
            <button type="button" aria-label="Табуляция" className={`h-full w-full border border-[#9db4d2] bg-[#e6f0fb] ${TICK}`}>
              <svg viewBox="0 0 7 6" className="h-[6px] w-[7px]" fill="none" stroke="#33415c" strokeWidth="1.500"><path d="M3.500 0v5M0 5h7" /></svg>
            </button>
          </div>
          <HorizontalRuler />
          <div className="flex h-full w-[14px] flex-col items-center gap-[2px] bg-[#b5cae6] pt-[3px]">
            <button type="button" aria-label="Разделить окно" className="h-[2px] w-[8px] bg-[#7f97bb]" />
            <button type="button" aria-label="Линейка" className={`h-[13px] w-[13px] border border-[#6f88ad] bg-[#a9c0df] ${TICK}`}>
              <svg viewBox="0 0 9 8" className="h-[8px] w-[9px]" fill="#f4f1ee" stroke="#77808f" strokeWidth=".8">
                <path d="M.5 1.500h5.500v2H3v3.500H.5zM4 4.500l4-1 .5 3.500-3 .5z" />
              </svg>
            </button>
          </div>
        </div>

        <main className="flex min-h-0 flex-1 overflow-hidden">
          <VerticalRuler />
          <div className="flex min-w-0 flex-1 bg-linear-to-b from-[#c5d8f0] to-[#829dbd] pr-[46px] pl-[47px]">
            <div className="relative min-w-0 flex-1 bg-white shadow-[0_0_7px_1px_#5e7391]">
              <div className="absolute top-[37px] right-[81px] flex items-center gap-[6px] font-['Liberation_Serif',serif] text-[18px]">
                <span className="whitespace-nowrap text-[#7f7f7f]">История московского Кремля</span>
                <span className={`h-[48px] w-[48px] bg-[#e0a6a6] text-[15px] text-white ${TICK}`}>
                  <span className="bg-[#bfbfbf] leading-[16px]">10</span>
                </span>
              </div>
              <Document />
              <NumberFormatDialog />
              <Callout />
            </div>
          </div>
          <Scrollbar />
        </main>
        <StatusBar />
      </div>
    </div>
  );
}
